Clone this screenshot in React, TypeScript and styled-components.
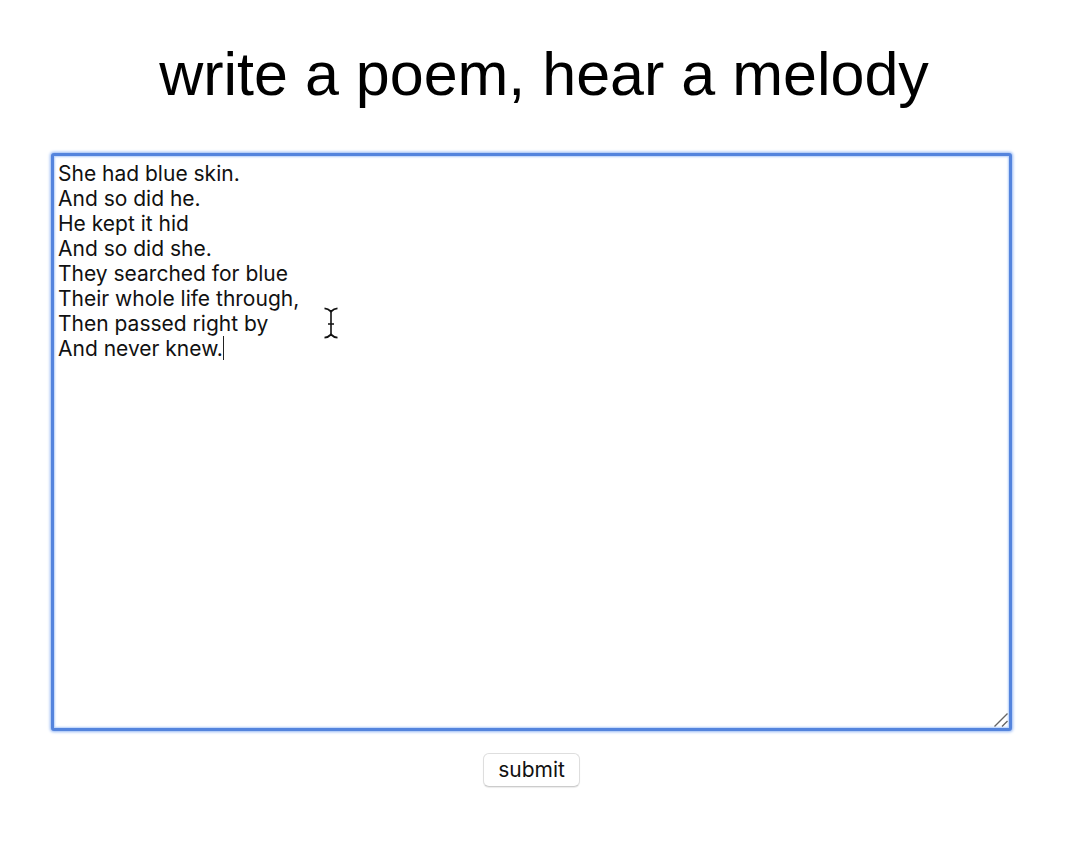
import React, { useState } from "react";
import styled, { createGlobalStyle } from "styled-components";

const GlobalStyle = createGlobalStyle`
  * {
    box-sizing: border-box;
  }

  body {
    margin: 0;
    background: #ffffff;
    color: #000000;
    font-family: Inter, "Liberation Sans", sans-serif;
  }
`;

const Page = styled.main`
  padding: 38px 0 76px;
`;

const Title = styled.h1`
  margin: 0;
  padding: 0 16px;
  font-family: "Liberation Sans", Helvetica, Arial, sans-serif;
  font-size: 61px;
  font-weight: 400;
  line-height: 72px;
  text-align: center;
`;

const PoemForm = styled.form`
  display: flex;
  flex-direction: column;
  align-items: center;
  gap: 22px;
  margin: 43px 76px 0 51px;
`;

const Editor = styled.div`
  position: relative;
  width: 100%;
`;

const PoemInput = styled.textarea`
  display: block;
  width: 100%;
  height: 578px;
  padding: 5px 4px;
  border: 3px solid #5484dd;
  border-radius: 3px;
  outline: none;
  box-shadow: 0 0 3px 1px #93b6f3, inset 0 0 2px 1px #b4cffa;
  background: #ffffff;
  color: #111111;
  caret-color: transparent;
  font-family: inherit;
  font-size: 21px;
  line-height: 25px;
  resize: none;
`;

const Caret = styled.span`
  position: absolute;
  top: 183px;
  left: 172px;
  width: 1px;
  height: 24px;
  background: #222222;
`;

const Pointer = styled.svg`
  position: absolute;
  top: 153px;
  left: 272px;
`;

const Grip = styled.svg`
  position: absolute;
  right: 4px;
  bottom: 4px;
`;

const SubmitButton = styled.button`
  height: 34px;
  padding: 0 14px;
  border: 1px solid #dedede;
  border-bottom-color: #cccccc;
  border-radius: 6px;
  background: #ffffff;
  box-shadow: 0 1px 1px #ebebeb;
  color: #111111;
  font-family: inherit;
  font-size: 21px;
  line-height: 24px;
`;

const POEM = [
  "She had blue skin.",
  "And so did he.",
  "He kept it hid",
  "And so did she.",
  "They searched for blue",
  "Their whole life through,",
  "Then passed right by",
  "And never knew.",
].join("\n");

export default function App() {
  const [poem, setPoem] = useState(POEM);

  return (
    <>
      <GlobalStyle />
      <Page>
        <Title id="title">write a poem, hear a melody</Title>
        <PoemForm onSubmit={(event: React.FormEvent) => event.preventDefault()}>
          <Editor>
            <PoemInput
              aria-labelledby="title"
              spellCheck={false}
              value={poem}
              onChange={(event: React.ChangeEvent<HTMLTextAreaElement>) =>
                setPoem(event.target.value)
              }
            />
            <Caret />
            <Pointer width="16" height="34" viewBox="0 0 16 34" fill="none" stroke="#111111" strokeWidth="1.8" aria-hidden="true">
              <path d="M1.5 2.3 Q5 2.5 8 5.5 Q11 2.5 14.5 2.3" />
              <path d="M1.5 31.7 Q5 31.5 8 28.5 Q11 31.5 14.5 31.7" />
              <path d="M8 5V29M5 18H11" strokeWidth="1.6" />
            </Pointer>
            <Grip width="14" height="14" viewBox="0 0 14 14" stroke="#666666" strokeWidth="1.4" aria-hidden="true">
              <path d="M0.5 13.5L13.5 0.5M8 13.5L13.5 8" />
            </Grip>
          </Editor>
          <SubmitButton type="submit">submit</SubmitButton>
        </PoemForm>
      </Page>
    </>
  );
}
